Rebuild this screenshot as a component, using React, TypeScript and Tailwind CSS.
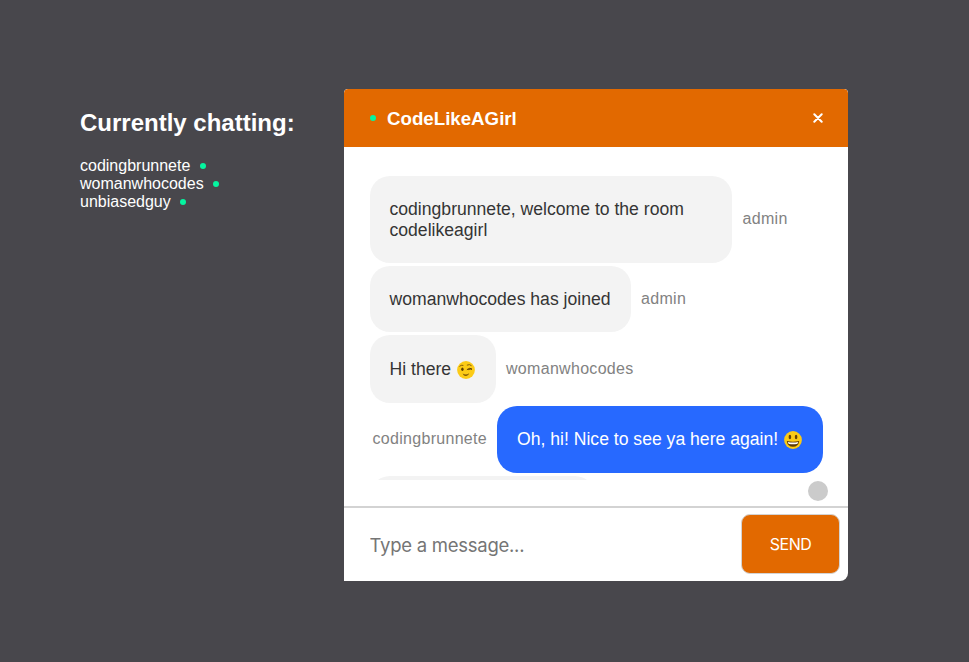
import type { ReactNode } from "react";

const people = [
  { name: "codingbrunnete", width: "w-[110px]" },
  { name: "womanwhocodes", width: "w-[123px]" },
  { name: "unbiasedguy", width: "w-[90px]" },
];

function OnlineDot() {
  return <span className="block size-1.5 shrink-0 rounded-full bg-[#05f5a0]" />;
}

function EmojiFace({ children }: { children: ReactNode }) {
  return (
    <svg viewBox="0 0 18 18" className="ml-[6px] mt-px size-[18px] shrink-0">
      <circle cx="9" cy="9" r="8.9" fill="#fccb16" />
      {children}
    </svg>
  );
}

function Wink() {
  return (
    <EmojiFace>
      <ellipse cx="5.4" cy="8.3" rx="1.2" ry="1.7" fill="#5c3c05" />
      <path d="M2.7 5.2Q4 3.7 6 4.3M10.2 4Q12.6 2.8 14.3 4.5" fill="none" stroke="#7c5508" strokeWidth=".9" strokeLinecap="round" />
      <path d="M10.2 8.4Q13 6.2 15 8.2Q13.4 7.6 11.6 8.5" fill="none" stroke="#5c3c05" strokeWidth="1" strokeLinecap="round" />
      <path d="M5.6 12.5Q9 14.8 12.2 12.3Q11.4 15.2 9 15.1Q6.6 15 5.6 12.5Z" fill="#7c5508" />
    </EmojiFace>
  );
}

function Grin() {
  return (
    <EmojiFace>
      <ellipse cx="5.9" cy="6" rx="1.3" ry="2.3" fill="#654006" />
      <ellipse cx="12.1" cy="6" rx="1.3" ry="2.3" fill="#654006" />
      <path d="M2.8 10Q9 11.5 15.2 10Q14.4 15.8 9 15.8Q3.6 15.8 2.8 10Z" fill="#5c3905" />
      <path d="M3.9 10.9Q9 12 14.1 10.9Q13.9 13 12.8 13Q9 13.6 5.2 13Q4.1 13 3.9 10.9Z" fill="#fff" />
    </EmojiFace>
  );
}

function Bubble({ size, mine = false, children }: { size: string; mine?: boolean; children?: ReactNode }) {
  return (
    <div className={`flex shrink-0 items-center rounded-[20px] text-[17.6px] leading-[21px] ${mine ? "bg-[#2769ff] pl-5 text-white" : "bg-[#f3f3f3] pl-[19.5px] text-[#353535]"} ${size}`}>
      {children}
    </div>
  );
}

function Author({ children }: { children: ReactNode }) {
  return <span className="text-base leading-[18px] tracking-[0.3px] text-[#828282]">{children}</span>;
}

export default function App() {
  return (
    <div className="flex h-[662px] w-[969px] items-start overflow-hidden bg-[#48474c] font-['Liberation_Sans',Arial,sans-serif]">
      <aside className="ml-20 mt-[108px] w-[264px] text-white">
        <h1 className="whitespace-nowrap text-2xl font-bold leading-[30px]">Currently chatting:</h1>
        <ul className="mt-[19px] text-base leading-[18px]">
          {people.map((p) => (
            <li key={p.name} className="flex items-center gap-2.5">
              <span className={p.width}>{p.name}</span>
              <OnlineDot />
            </li>
          ))}
        </ul>
      </aside>
      <main className="mt-[89px] flex h-[492px] w-[504px] flex-col overflow-hidden rounded-t-[4px] rounded-br-[8px] bg-white">
        <header className="flex h-[58px] shrink-0 items-center rounded-t-[4px] bg-[#e26900] pl-[26px] pr-[25px] text-white">
          <OnlineDot />
          <h2 className="ml-[11px] mt-0.5 text-[18.7px] font-bold leading-6">CodeLikeAGirl</h2>
          <button className="ml-auto" aria-label="Close">
            <svg viewBox="0 0 10 10" className="size-2.5">
              <path d="M1.3 1.3L8.7 8.7M8.7 1.3L1.3 8.7" stroke="white" strokeWidth="2" strokeLinecap="round" />
            </svg>
          </button>
        </header>
        <section className="mt-[29px] flex h-[304px] shrink-0 flex-col gap-[3px] overflow-hidden px-[26px]">
          <div className="flex shrink-0 items-center gap-[10.5px]">
            <Bubble size="h-[87px] w-[362px] pr-5">
              <span>codingbrunnete, welcome to the room codelikeagirl</span>
            </Bubble>
            <span className="-mt-0.5 h-[18px] leading-[18px]">
              <Author>admin</Author>
            </span>
          </div>
          <div className="flex shrink-0 items-center gap-2.5">
            <Bubble size="h-[66px] w-[261px] whitespace-nowrap">womanwhocodes has joined</Bubble>
            <Author>admin</Author>
          </div>
          <div className="flex shrink-0 items-center gap-2.5">
            <Bubble size="h-[68px] w-[126px] whitespace-nowrap">Hi there<Wink /></Bubble>
            <Author>womanwhocodes</Author>
          </div>
          <div className="flex shrink-0 items-center justify-end gap-2.5">
            <span className="-mt-0.5 h-[18px] leading-[18px]">
              <Author>codingbrunnete</Author>
            </span>
            <Bubble mine size="-mr-px h-[67px] w-[326px] whitespace-nowrap">Oh, hi! Nice to see ya here again!<Grin /></Bubble>
          </div>
          <Bubble size="h-[66px] w-[225px]" />
        </section>
        <div className="flex h-[26px] shrink-0 justify-end pr-5 pt-px">
          <span className="block size-5 rounded-full bg-[#cbcbcb]" />
        </div>
        <form className="flex h-[75px] shrink-0 items-start border-t-2 border-[#d3d3d3] pl-[25.5px] pr-2">
          <input
            aria-label="Message"
            placeholder="Type a message..."
            className="mt-[17px] h-10 min-w-0 flex-1 bg-transparent font-['Inter',sans-serif] text-[18.5px] tracking-[-0.26px] outline-none placeholder:text-[#757575]"
          />
          <button type="button" className="mt-1.5 h-[60px] w-[99px] rounded-[9px] border border-[#d3d3d3] bg-[#e26900] font-['Inter',sans-serif] text-base tracking-[-0.45px] text-white">
            SEND
          </button>
        </form>
      </main>
    </div>
  );
}
